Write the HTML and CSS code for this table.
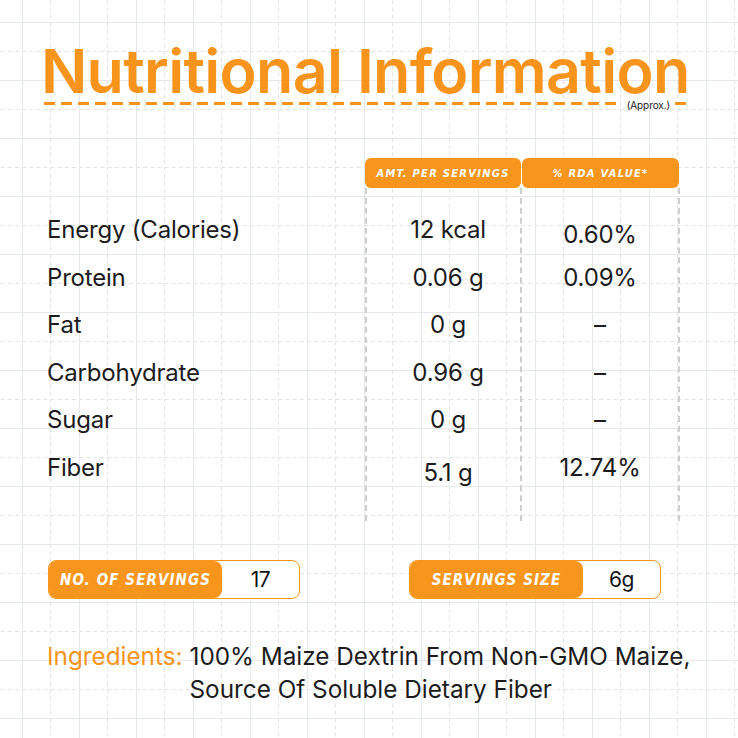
FILE: index.html
```html
<!DOCTYPE html>
<html lang="en">
<head>
<meta charset="utf-8">
<title>Nutritional Information</title>
<link rel="stylesheet" href="styles.css">
</head>
<body>
<main class="page">
  <header class="heading">
    <h1 class="title">Nutritional Information</h1>
    <div class="rule">
      <span class="dash"></span>
      <span class="approx">(Approx.)</span>
      <span class="dash dash-end"></span>
    </div>
  </header>

  <section class="table">
    <div class="thead">
      <div></div>
      <div class="pill-head">AMT. PER SERVINGS</div>
      <div class="pill-head">% RDA VALUE*</div>
    </div>
    <div class="tbody">
      <div class="col col-label">
        <div class="cell">Energy (Calories)</div>
        <div class="cell">Protein</div>
        <div class="cell">Fat</div>
        <div class="cell">Carbohydrate</div>
        <div class="cell">Sugar</div>
        <div class="cell">Fiber</div>
      </div>
      <div class="col col-amt">
        <div class="cell">12 kcal</div>
        <div class="cell">0.06 g</div>
        <div class="cell">0 g</div>
        <div class="cell">0.96 g</div>
        <div class="cell">0 g</div>
        <div class="cell cell-low">5.1 g</div>
      </div>
      <div class="col col-rda">
        <div class="cell cell-low">0.60%</div>
        <div class="cell">0.09%</div>
        <div class="cell">–</div>
        <div class="cell">–</div>
        <div class="cell">–</div>
        <div class="cell">12.74%</div>
      </div>
    </div>
  </section>

  <section class="facts">
    <div class="fact">
      <span class="fact-label">NO. OF SERVINGS</span>
      <span class="fact-value">17</span>
    </div>
    <div class="fact">
      <span class="fact-label">SERVINGS SIZE</span>
      <span class="fact-value">6g</span>
    </div>
  </section>

  <section class="ingredients">
    <span class="ing-label">Ingredients:</span>
    <span class="ing-text">100% Maize Dextrin From Non-GMO Maize,<br>Source Of Soluble Dietary Fiber</span>
  </section>
</main>
</body>
</html>
```

FILE: styles.css
```css
* { box-sizing: border-box; }

html, body {
  margin: 0;
  padding: 0;
}

body {
  width: 738px;
  height: 738px;
  overflow: hidden;
  background-color: #ffffff;
  background-image: url("data:image/svg+xml,%3Csvg xmlns='http://www.w3.org/2000/svg' width='57' height='58'%3E%3Cpath d='M0.5 0V58M0 0.5H57' stroke='%23e5e9ea' stroke-width='1' fill='none'/%3E%3Cpath d='M28.5 0V58' stroke='%23e3e3e3' stroke-width='1' stroke-dasharray='4 3.25' fill='none'/%3E%3Cpath d='M0 29.5H57' stroke='%23e3e3e3' stroke-width='1' stroke-dasharray='4 3.125' fill='none'/%3E%3C/svg%3E");
  background-size: 57px 58px;
  background-position: 22px 22px;
  font-family: "Inter", "Lato", "Liberation Sans", sans-serif;
  color: #1c1c1c;
}

.page {
  padding-top: 45px;
}

/* ---------- heading ---------- */
.heading {
  margin-left: 41px;
  width: 646px;
}

.title {
  margin: 0;
  font-family: "Inter", "Lato", sans-serif;
  font-weight: 600;
  font-size: 61px;
  line-height: 52px;
  letter-spacing: -0.7px;
  color: #f8941c;
  white-space: nowrap;
}

.rule {
  display: flex;
  align-items: center;
  gap: 5px;
  height: 10px;
  margin-top: 1px;
  margin-left: 3px;
}

.dash {
  flex: 1;
  height: 3px;
  background: repeating-linear-gradient(to right, #f8941c 0 11px, transparent 11px 17px);
}

.dash-end {
  flex: 0 0 12px;
}

.approx {
  font-size: 10px;
  line-height: 10px;
  color: #222;
  letter-spacing: -0.1px;
  padding-top: 4px;
}

/* ---------- table ---------- */
.table {
  margin-top: 50px;
  margin-left: 47px;
  width: 633px;
}

.thead,
.tbody {
  display: grid;
  grid-template-columns: 318px 157px 158px;
}

.thead {
  height: 30px;
}

.pill-head {
  background: #f8951d;
  border-radius: 6px;
  color: #fff;
  font-family: "DejaVu Sans", sans-serif;
  font-stretch: condensed;
  font-style: italic;
  font-weight: bold;
  font-size: 11px;
  letter-spacing: 1.3px;
  display: flex;
  align-items: center;
  justify-content: center;
  margin-right: 1px;
}

.tbody {
  height: 333px;
}

.col {
  display: flex;
  flex-direction: column;
  padding-top: 18px;
}

.col-amt {
  border-left: 2px dashed #cdcdcd;
  border-right: 2px dashed #cdcdcd;
  align-items: center;
  padding-left: 9px;
}

.col-rda {
  border-right: 2px dashed #cdcdcd;
  align-items: center;
}

.cell {
  height: 47.6px;
  line-height: 47.6px;
  font-size: 24px;
  letter-spacing: -0.2px;
  white-space: nowrap;
}

.cell-low {
  padding-top: 5px;
}

/* ---------- facts ---------- */
.facts {
  display: flex;
  gap: 109px;
  margin-top: 39px;
  margin-left: 48px;
}

.fact {
  display: flex;
  width: 252px;
  height: 39px;
  border: 1.5px solid #f8951d;
  border-radius: 8px;
  overflow: hidden;
  background: #fff;
}

.fact-label {
  flex: 0 0 173px;
  background: #f8951d;
  border-radius: 0 8px 8px 0;
  color: #fff;
  font-family: "DejaVu Sans", sans-serif;
  font-stretch: condensed;
  font-style: italic;
  font-weight: bold;
  font-size: 15px;
  letter-spacing: 1.1px;
  display: flex;
  align-items: center;
  justify-content: center;
}

.fact-value {
  flex: 1;
  display: flex;
  align-items: center;
  justify-content: center;
  font-size: 21px;
  letter-spacing: -0.5px;
  color: #111;
}

/* ---------- ingredients ---------- */
.ingredients {
  display: flex;
  margin-top: 41px;
  margin-left: 47px;
  font-size: 24.3px;
  line-height: 33px;
  letter-spacing: 0;
}

.ing-label {
  color: #f8941c;
  margin-right: 7px;
  white-space: nowrap;
}

.ing-text {
  color: #1c1c1c;
  white-space: nowrap;
}
```
